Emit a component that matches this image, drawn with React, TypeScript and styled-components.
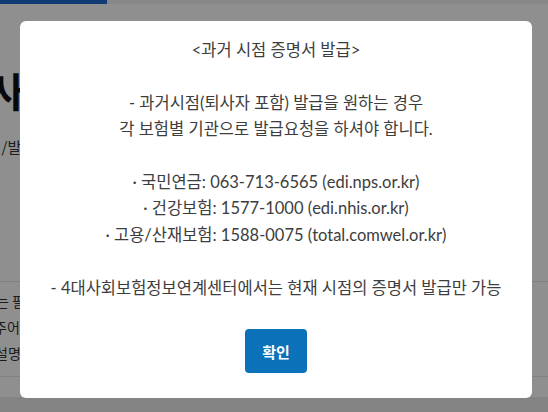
import React from "react";
import styled, { createGlobalStyle } from "styled-components";

const Global = createGlobalStyle`
  html, body { margin: 0; padding: 0; background: #fff; }
  body { font-family: "Lato", "Noto Sans CJK KR", sans-serif; width: 548px; height: 412px; overflow: hidden; }
`;

const Page = styled.div`
  position: relative;
  width: 548px;
  height: 412px;
  overflow: hidden;
  background: #fff;
`;

const TopBar = styled.div`
  display: flex;
  height: 4px;
  background: #f2f2f2;
`;

const TopActive = styled.div`
  width: 107px;
  background: #1d68cd;
`;

const Heading = styled.h1`
  margin: 60px 0 0 -12px;
  font-family: "Noto Sans CJK KR", sans-serif;
  font-size: 40px;
  font-weight: 700;
  line-height: 52px;
  color: #111;
`;

const Sub = styled.div`
  margin: 20px 0 0 -26px;
  font-family: "Noto Sans CJK KR", sans-serif;
  font-size: 15px;
  color: #333;
`;

const Section = styled.div`
  margin-top: 124px;
  border-top: 1px solid #e4e4e4;
  border-bottom: 1px solid #e4e4e4;
  padding: 6px 0 10px;
`;

const Row = styled.div<{ $shift: number }>`
  margin-left: ${(p) => p.$shift}px;
  font-family: "Noto Sans CJK KR", sans-serif;
  font-size: 14px;
  line-height: 26px;
  color: #333;
  white-space: nowrap;
`;

const Footer = styled.div`
  margin-top: 20px;
  height: 30px;
  background: #ececec;
`;

const Overlay = styled.div`
  position: absolute;
  inset: 0;
  background: rgba(0, 0, 0, 0.44);
  display: flex;
  align-items: flex-start;
  justify-content: flex-start;
  padding: 21px 0 0 20px;
`;

const Modal = styled.div`
  width: 512px;
  height: 377px;
  box-sizing: border-box;
  background: #fff;
  border-radius: 6px;
  padding: 16px 0 25px;
  display: flex;
  flex-direction: column;
  align-items: center;
`;

const Message = styled.div`
  font-size: 16.5px;
  line-height: 26.4px;
  color: #3d3d3d;
  text-align: center;
  white-space: pre-line;
`;

const Confirm = styled.button`
  margin-top: auto;
  width: 62px;
  height: 44px;
  border: none;
  border-radius: 4px;
  background: #0b72b9;
  color: #fff;
  font-family: "Noto Sans CJK KR", sans-serif;
  font-size: 15px;
  font-weight: 700;
  cursor: pointer;
`;

const text = `<과거 시점 증명서 발급>

- 과거시점(퇴사자 포함) 발급을 원하는 경우
각 보험별 기관으로 발급요청을 하셔야 합니다.

· 국민연금: 063-713-6565 (edi.nps.or.kr)
· 건강보험: 1577-1000 (edi.nhis.or.kr)
· 고용/산재보험: 1588-0075 (total.comwel.or.kr)

- 4대사회보험정보연계센터에서는 현재 시점의 증명서 발급만 가능`;

export default function App() {
  return (
    <>
      <Global />
      <Page>
        <TopBar>
          <TopActive />
        </TopBar>
        <Heading>사업장</Heading>
        <Sub>조회/발급</Sub>
        <Section>
          <Row $shift={-4}>는 필수 항목입니다</Row>
          <Row $shift={-6}>주어 있습니다</Row>
          <Row $shift={-5}>설명은 아래를 참고</Row>
        </Section>
        <Footer />
        <Overlay>
          <Modal>
            <Message>{text}</Message>
            <Confirm>확인</Confirm>
          </Modal>
        </Overlay>
      </Page>
    </>
  );
}
